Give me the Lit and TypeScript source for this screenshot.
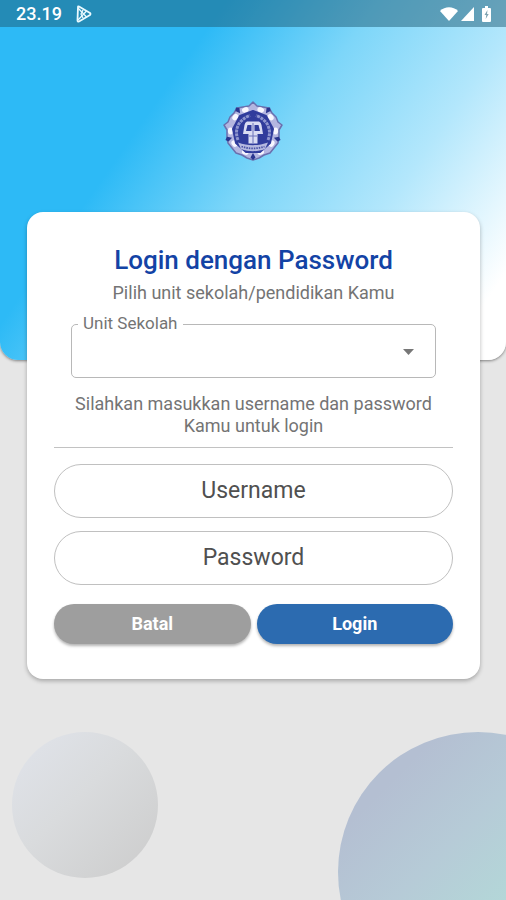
import { LitElement, html, css, svg } from "lit";
import { customElement } from "lit/decorators.js";

const pearls = [20, 52, 90, 124, 160, 200, 236, 270, 308, 340];
const markers = [36, 108, 180, 252, 324];

@customElement("school-emblem")
export class SchoolEmblem extends LitElement {
  static styles = css`
    :host { display: block; }
    .emblem { display: block; width: 60px; height: 60px; }
  `;

  render() {
    return html`
      <svg class="emblem" viewBox="0 0 60 60" role="img" aria-label="Logo sekolah">
        <path d="M30 1 L34 5 L40 6 L46 7 L49 12 L53 16 L55 21 L59 24 L56 29 L56 36 L55 42 L51 47 L47 52 L41 54 L36 57 L30 59 L24 57 L19 54 L13 52 L9 47 L5 42 L4 36 L4 29 L1 24 L5 21 L7 16 L11 12 L14 7 L20 6 L26 5Z"
          fill="#b4b6e0" stroke="#6a70ae" stroke-width="1.500" stroke-linejoin="round" />
        ${pearls.map((a) => svg`<ellipse transform="rotate(${a} 30 30)" cx="30" cy="7.500" rx="3.400" ry="2.600" fill="#f8f7ff" />`)}
        ${markers.map((a) => svg`<path transform="rotate(${a} 30 30)" d="M30 8 L27.500 3.500 L30 1 L32.500 3.500Z" fill="#2a358f" />`)}
        <path d="M30 10 L43 15 L50 28 L47 42 L37 51 L23 51 L13 42 L10 28 L17 15Z" fill="#303c9c" stroke="#303c9c" stroke-width="2" stroke-linejoin="round" />
        <path d="M15 39 C11 29 15 19 27 14.500" fill="none" stroke="#8f96cf" stroke-width="3" stroke-dasharray="3 .8" />
        <path d="M45 39 C49 29 45 19 33 14.500" fill="none" stroke="#8f96cf" stroke-width="3" stroke-dasharray="3 .8" />
        <path d="M24 20.500 H36 Q38 21 38.500 24 L40 33 H34.500 V42.500 H25.500 V33 H20 L21.500 24 Q22 21 24 20.500Z" fill="#d9dcf3" />
        <path d="M24.500 24 H28.500 V30 H23Z M35.500 24 H31.500 V30 H37Z" fill="#303c9c" />
        <path d="M30 22 V42 M26 35 H34" stroke="#6a73b9" stroke-width="1" />
        <path d="M15 41.500 C25 45 35 45 45 41.500 L42 48 C34 51 26 51 18 48Z" fill="#b5b9e0" />
        <path d="M18.500 45.500 C26 48 34 48 41.500 45.500" fill="none" stroke="#4952a6" stroke-width="1.800" stroke-dasharray="1.500 1" />
      </svg>
    `;
  }
}

@customElement("status-bar")
export class StatusBar extends LitElement {
  static styles = css`
    :host {
      display: flex;
      align-items: center;
      justify-content: space-between;
      height: 27px;
      padding: 0 15px 0 16px;
      background: rgba(27, 88, 112, 0.48);
      color: #fff;
      font: 500 18px/27px Roboto, sans-serif;
    }
    .group { display: flex; align-items: center; gap: 14px; }
    .icons { display: flex; align-items: center; gap: 3px; }
    .battery { margin-left: 5px; }
    svg { display: block; }
  `;

  render() {
    return html`
      <div class="group">
        <span>23.19</span>
        <svg width="16" height="18" viewBox="0 0 16 18" fill="none" stroke="#eafaff" stroke-width="1.800" stroke-linejoin="round">
          <path d="M2 2 Q2 1 3 1.500 L14 8 Q15 9 14 10 L3 16.500 Q1.500 17 1.500 15.500Z" />
          <path d="M2 3 L10.500 12 M2 15 L10.500 6 M7 5 L5 9 L7 13" stroke-width="1.300" />
        </svg>
      </div>
      <div class="icons">
        <svg width="18" height="14" viewBox="0 0 18 14" fill="#fff"><path d="M0 4 C5 -1 13 -1 18 4 L9 14Z" /></svg>
        <svg width="13" height="14" viewBox="0 0 13 14" fill="#fff"><path d="M13 0 V14 H0Z" /></svg>
        <svg class="battery" width="9" height="16" viewBox="0 0 9 16">
          <path d="M3 0 H6 V2 H8 Q9 2 9 3 V15 Q9 16 8 16 H1 Q0 16 0 15 V3 Q0 2 1 2 H3Z" fill="#fff" />
          <path d="M5.500 4 L2.500 9 H4.300 L3.700 13 L6.700 8 H5Z" fill="#7fa3b1" />
        </svg>
      </div>
    `;
  }
}

@customElement("login-card")
export class LoginCard extends LitElement {
  static styles = css`
    :host { display: block; }
    * { box-sizing: border-box; }
    .card {
      display: flex;
      flex-direction: column;
      padding: 32px 27px 35px;
      border-radius: 16px;
      background: #fff;
      box-shadow: 0 2px 4px rgba(0, 0, 0, 0.28);
      text-align: center;
      color: #747474;
      font: 400 18px/22px Roboto, sans-serif;
    }
    h1 { margin: 0 0 6px; color: #1343a5; font-size: 26px; font-weight: 500; line-height: 32px; }
    p { margin: 0; }
    .unit { position: relative; margin: 20px 17px 15px; }
    .unit label {
      position: absolute;
      left: 7px;
      top: -12px;
      padding: 0 5px;
      background: #fff;
      font-size: 17px;
    }
    select {
      display: block;
      width: 100%;
      height: 54px;
      padding: 0 40px 0 12px;
      border: 1px solid #b8b8b8;
      border-radius: 5px;
      background: #fff;
      appearance: none;
      font: inherit;
      color: #444;
    }
    .arrow { position: absolute; right: 22px; top: 25px; pointer-events: none; }
    hr { width: 100%; height: 1px; margin: 10px 0 16px; border: 0; background: #c2c2c2; }
    .fields { display: grid; gap: 13px; }
    input {
      width: 100%;
      height: 54px;
      padding: 0 24px 2px;
      border: 1px solid #c0c0c0;
      border-radius: 27px;
      background: #fff;
      text-align: center;
      color: #484848;
      font: 400 23px/30px Roboto, sans-serif;
    }
    input::placeholder { color: #505050; opacity: 1; }
    .actions { display: grid; grid-template-columns: 1fr 1fr; gap: 6px; margin-top: 19px; }
    button {
      height: 40px;
      padding: 0;
      border: 0;
      border-radius: 20px;
      background: #9e9e9e;
      box-shadow: 0 2px 3px rgba(0, 0, 0, 0.3);
      color: #fff;
      font: 700 18px/22px Roboto, sans-serif;
    }
    .primary { background: #2c6bb0; }
  `;

  render() {
    return html`
      <form class="card" @submit=${(e: Event) => e.preventDefault()}>
        <h1>Login dengan Password</h1>
        <p>Pilih unit sekolah/pendidikan Kamu</p>
        <div class="unit">
          <select id="unit"><option value=""></option></select>
          <label for="unit">Unit Sekolah</label>
          <svg class="arrow" width="11" height="6" viewBox="0 0 11 6"><path d="M0 0 H11 L5.500 6Z" fill="#777" /></svg>
        </div>
        <p>Silahkan masukkan username dan password Kamu untuk login</p>
        <hr />
        <div class="fields">
          <input type="text" placeholder="Username" aria-label="Username" autocomplete="username" />
          <input type="password" placeholder="Password" aria-label="Password" autocomplete="current-password" />
        </div>
        <div class="actions">
          <button type="button">Batal</button>
          <button class="primary" type="submit">Login</button>
        </div>
      </form>
    `;
  }
}

@customElement("app-root")
export class AppRoot extends LitElement {
  static styles = css`
    :host {
      display: block;
      position: relative;
      isolation: isolate;
      box-sizing: border-box;
      min-height: 100vh;
      overflow: hidden;
      background: #e6e6e6;
    }
    .hero {
      height: 360px;
      border-radius: 0 0 18px 18px;
      overflow: hidden;
      background: linear-gradient(125deg, #2dbaf6 30%, #7dd6f9 50%, #b3e7fc 70%, #fff 92%);
    }
    .hero-shadow { border-radius: 0 0 18px 18px; box-shadow: 0 1px 3px rgba(0, 0, 0, 0.45); }
    .logo { display: flex; justify-content: center; padding-top: 74px; }
    .content { position: relative; margin: -148px 26px 0 27px; }
    .circle { position: absolute; z-index: -1; border-radius: 50%; }
    .small {
      left: 12px;
      bottom: 22px;
      width: 146px;
      height: 146px;
      background: linear-gradient(135deg, #dfe2e8 10%, #d9dbdd 45%, #cdcdcd 95%);
    }
    .large {
      right: -112px;
      bottom: -112px;
      width: 280px;
      height: 280px;
      background: linear-gradient(135deg, #b4bfd2 18%, #b6cbd7 40%, #b3d8d8 62%);
    }
  `;

  render() {
    return html`
      <div class="circle small"></div>
      <div class="circle large"></div>
      <header class="hero-shadow">
        <div class="hero">
          <status-bar></status-bar>
          <div class="logo"><school-emblem></school-emblem></div>
        </div>
      </header>
      <main class="content"><login-card></login-card></main>
    `;
  }
}
